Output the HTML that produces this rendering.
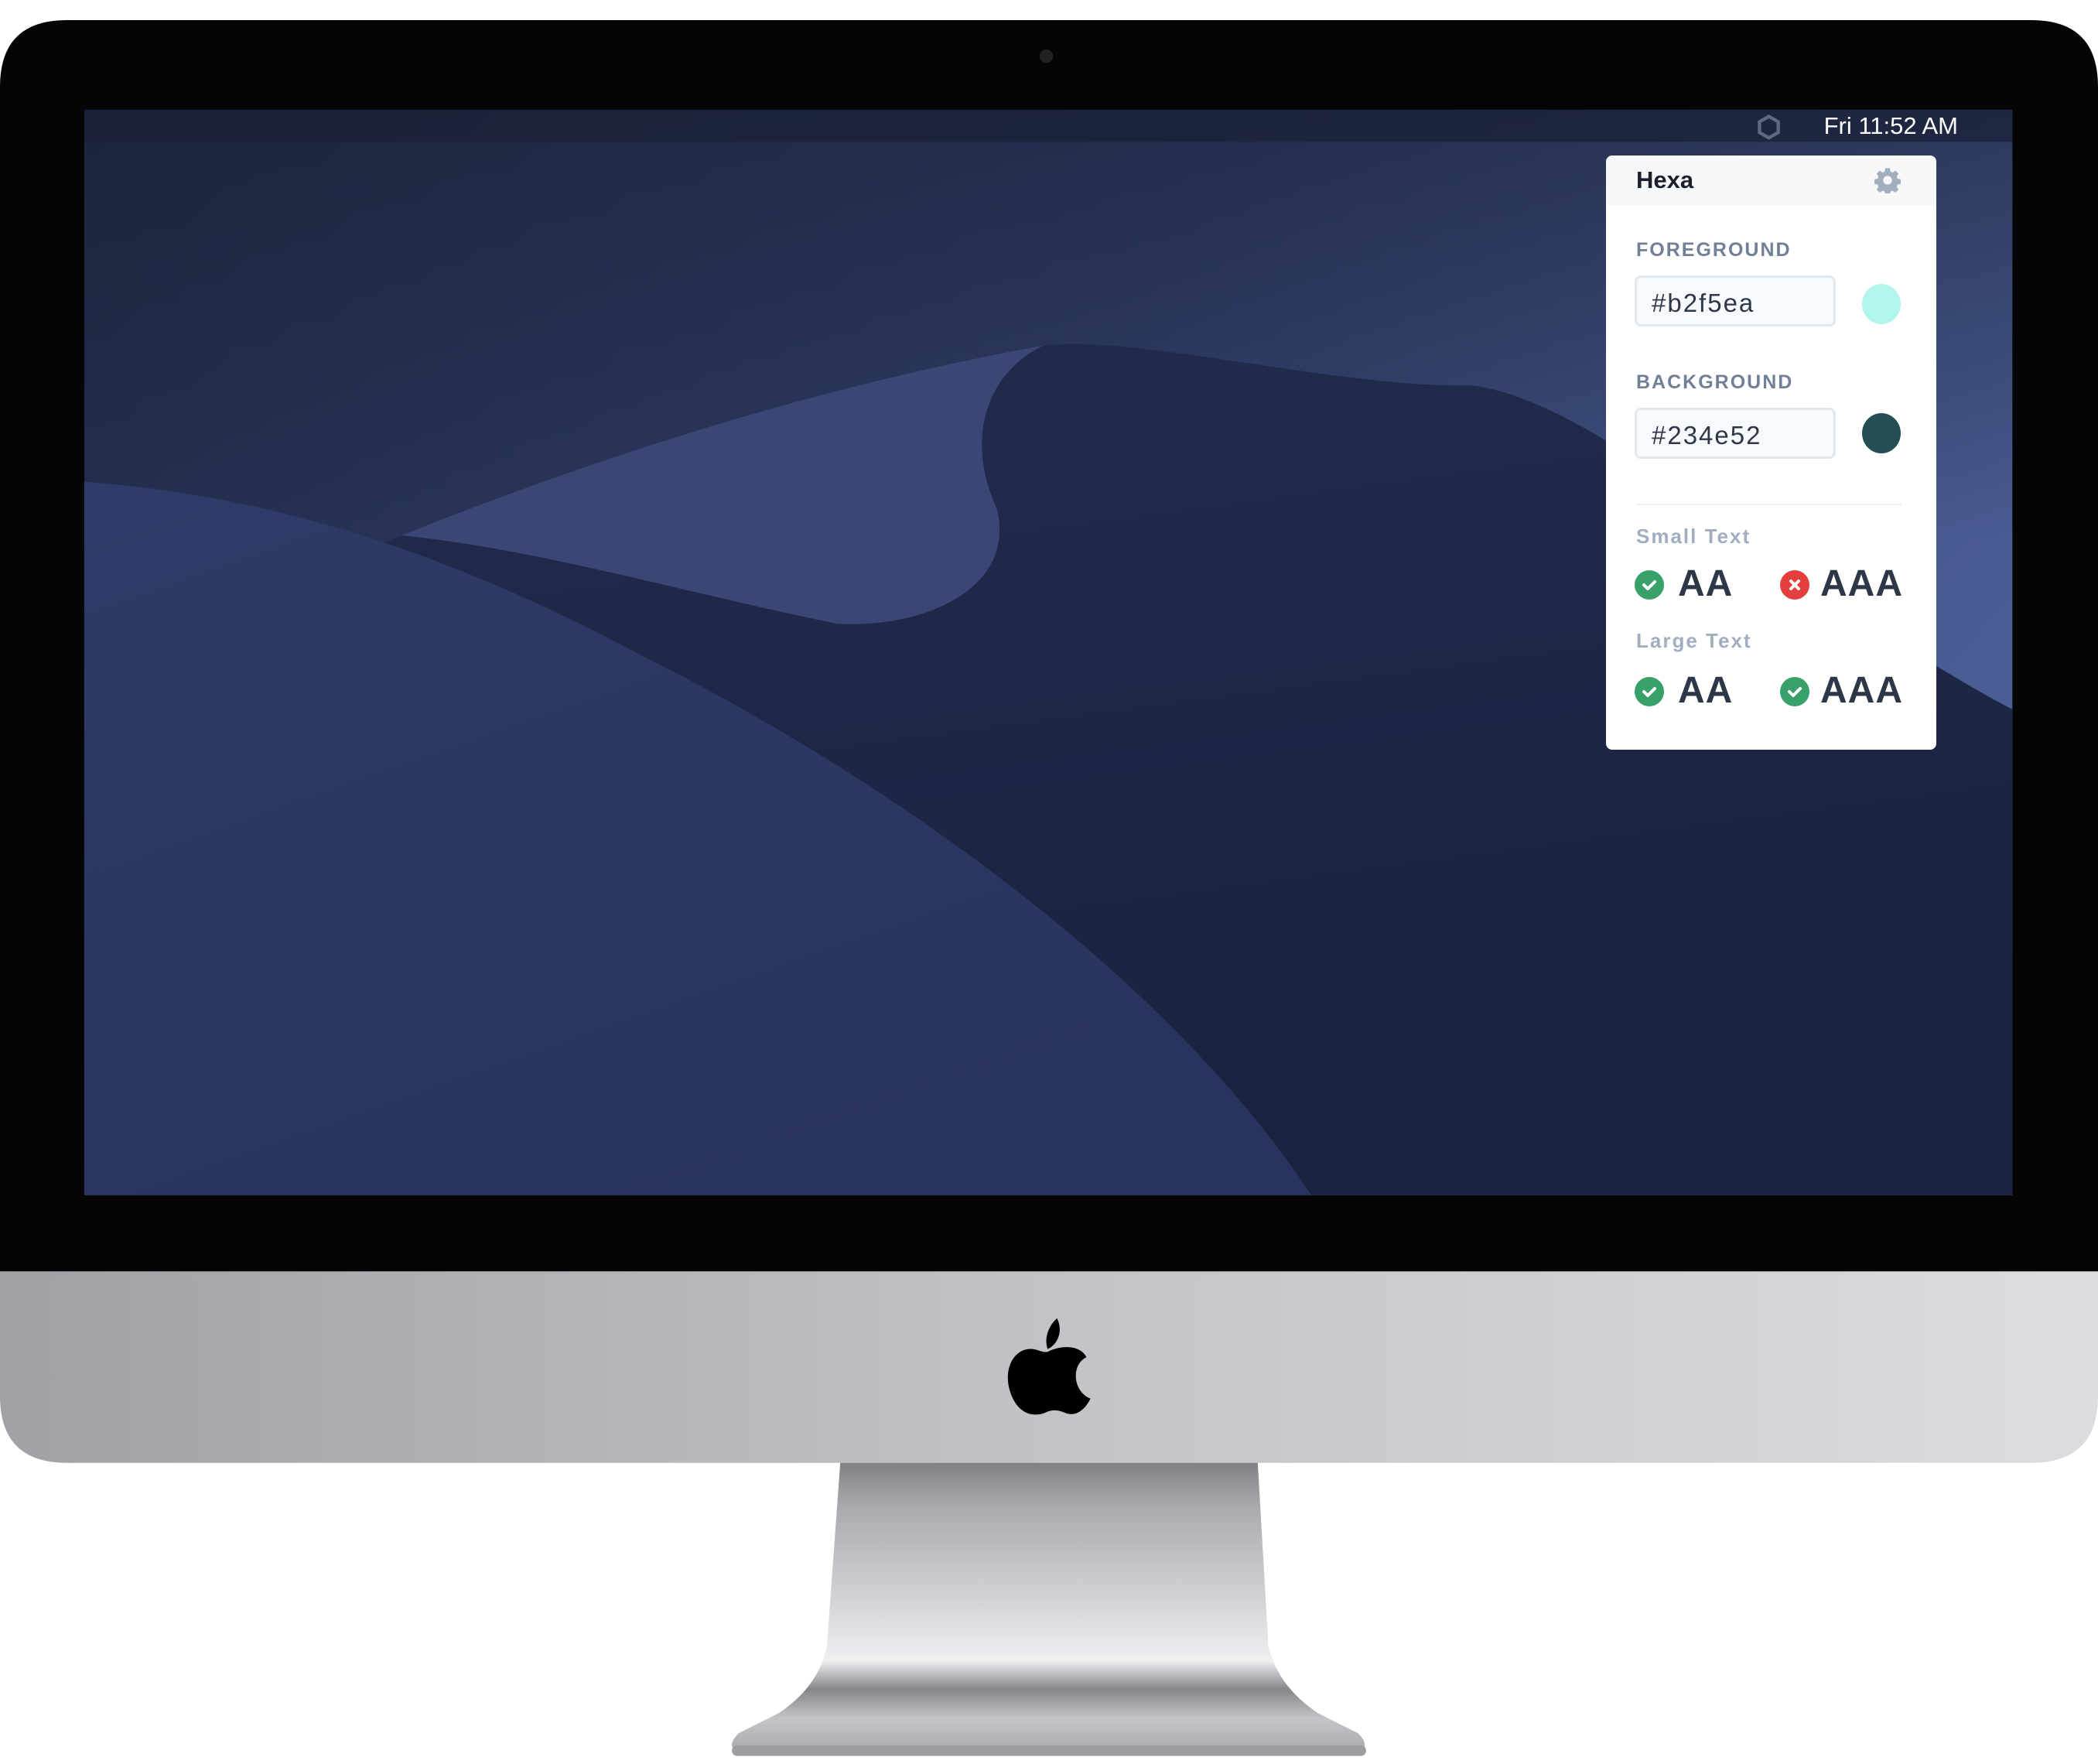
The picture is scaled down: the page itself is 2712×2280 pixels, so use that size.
<!DOCTYPE html>
<html><head><meta charset="utf-8"><style>
html,body{margin:0;padding:0;width:2712px;height:2280px;background:#fff;overflow:hidden;font-family:"Liberation Sans",sans-serif}
svg.bg{position:absolute;left:0;top:0}
.pop{position:absolute;left:2076px;top:201px;width:427px;height:768px;background:#fff;border-radius:8px;overflow:hidden}
.hdr{position:absolute;left:0;top:0;width:427px;height:64px;background:#f7f8fa}
.t{position:absolute;white-space:nowrap}
.lbl{font-size:25px;color:#718096;letter-spacing:2px;font-weight:bold}
.inp{position:absolute;left:37px;width:260px;height:66px;border:3px solid #e2e8f0;border-radius:8px;background:#f7fafc;box-sizing:border-box}
.inp span{position:absolute;left:19px;top:14px;font-size:33px;color:#2d3748;letter-spacing:2px}
.sm{font-size:26px;color:#a0aec0;letter-spacing:2px;font-weight:bold}
.big{font-size:48px;font-weight:bold;color:#2d3748;letter-spacing:1px}
.ic{position:absolute;width:38px;height:38px;border-radius:50%}
</style></head><body>
<svg class="bg" width="2712" height="2280" viewBox="0 0 1568 1318" preserveAspectRatio="none">
<defs>
<linearGradient id="sky" x1="0" y1="0" x2="1" y2="0.5"><stop offset="0" stop-color="#1f2844"/><stop offset="0.5" stop-color="#2e3b64"/><stop offset="1" stop-color="#4b5e96"/></linearGradient>
<linearGradient id="skyv" x1="0" y1="0" x2="0" y2="1"><stop offset="0" stop-color="#1a2036" stop-opacity="0.5"/><stop offset="0.4" stop-color="#1a2036" stop-opacity="0"/></linearGradient>
<linearGradient id="chin" x1="0" y1="0" x2="1" y2="0"><stop offset="0" stop-color="#a0a1a5"/><stop offset="0.5" stop-color="#c2c3c6"/><stop offset="1" stop-color="#dcdde0"/></linearGradient>
<linearGradient id="stand" x1="0" y1="0" x2="0" y2="1"><stop offset="0" stop-color="#808185"/><stop offset="0.15" stop-color="#a9aaae"/><stop offset="0.5" stop-color="#d6d7da"/><stop offset="0.68" stop-color="#eeeff1"/><stop offset="0.78" stop-color="#85868a"/><stop offset="0.88" stop-color="#c4c5c8"/><stop offset="1" stop-color="#a8a9ad"/></linearGradient>
<linearGradient id="fg" x1="0" y1="0" x2="0.6" y2="1"><stop offset="0" stop-color="#2f3b68"/><stop offset="1" stop-color="#29345e"/></linearGradient>
<linearGradient id="gr" x1="0" y1="0" x2="0.3" y2="1"><stop offset="0" stop-color="#222c4e"/><stop offset="1" stop-color="#1a2240"/></linearGradient>
</defs>
<path d="M50,15 H1518 Q1568,15 1568,65 V950 H0 V65 Q0,15 50,15Z" fill="#050505"/>
<circle cx="782" cy="42" r="5" fill="#222"/>
<path d="M0,950 H1568 V1043 Q1568,1093 1518,1093 H50 Q0,1093 0,1043Z" fill="url(#chin)"/>
<path d="M628,1093 H940 L948,1230 Q955,1260 985,1280 L1015,1295 Q1025,1305 1015,1310 H552 Q542,1305 552,1295 L582,1280 Q612,1260 618,1230Z" fill="url(#stand)"/>
<rect x="547" y="1304" width="474" height="8" rx="4" fill="#9c9da1"/>
<path d="M790,985 C795,995 790,1005 783,1008 C780,1000 784,990 790,985Z M783,1010 C795,1004 808,1006 812,1014 C800,1020 802,1040 815,1045 C810,1055 803,1058 797,1056 C790,1053 786,1053 780,1056 C770,1059 760,1055 755,1040 C750,1025 756,1010 768,1008 C775,1007 778,1011 783,1010Z" fill="#000"/>
<rect x="63" y="82" width="1441" height="811" fill="url(#sky)"/>
<rect x="63" y="82" width="1441" height="811" fill="url(#skyv)"/>
<path d="M300,400 Q550,300 780,258 C850,250 1000,290 1100,288 C1200,300 1350,450 1504,530 V893 H63 V500Z" fill="url(#gr)"/>
<path d="M300,400 Q550,300 780,258 C735,280 722,330 745,380 C760,440 690,470 625,466 C500,440 400,410 300,400Z" fill="#3c4674"/>
<path d="M63,360 C200,370 330,410 480,490 C680,590 880,740 980,893 H63Z" fill="url(#fg)"/>
<rect x="63" y="82" width="1441" height="24" fill="#1a2036" opacity="0.7"/>
<path d="M1322,87 L1329,91 V99 L1322,103 L1315,99 V91Z" fill="none" stroke="#5f6a80" stroke-width="2.5"/>
</svg>
<div class="t" style="right:181px;top:145px;font-size:31px;color:#fff">Fri 11:52 AM</div>
<div class="pop">
<div class="hdr"></div>
<div class="t" style="left:39px;top:14px;font-size:31px;font-weight:bold;color:#1a202c">Hexa</div>
<svg class="t" style="left:347px;top:15px" width="34" height="34" viewBox="0 0 24 24"><path fill="#a0aec0" d="M10 1h4l.6 3 2 .9 2.6-1.7 2.8 2.8-1.7 2.6.9 2 3 .6v4l-3 .6-.9 2 1.7 2.6-2.8 2.8-2.6-1.7-2 .9-.6 3h-4l-.6-3-2-.9-2.6 1.7-2.8-2.8 1.7-2.6-.9-2-3-.6v-4l3-.6.9-2-1.7-2.6 2.8-2.8 2.6 1.7 2-.9zM12 8a4 4 0 100 8 4 4 0 000-8z"/></svg>
<div class="t lbl" style="left:39px;top:108px">FOREGROUND</div>
<div class="inp" style="top:155px"><span>#b2f5ea</span></div>
<div class="ic" style="left:331px;top:166px;width:50px;height:52px;background:#b2f5ea"></div>
<div class="t lbl" style="left:39px;top:279px">BACKGROUND</div>
<div class="inp" style="top:326px"><span>#234e52</span></div>
<div class="ic" style="left:331px;top:333px;width:50px;height:52px;background:#234e52"></div>
<div style="position:absolute;left:39px;top:450px;width:343px;height:2px;background:#edf0f4"></div>
<div class="t sm" style="left:39px;top:477px">Small Text</div>
<div class="ic" style="left:37px;top:536px;background:#38a169"><svg width="38" height="38" viewBox="0 0 38 38"><path d="M12 19l5 5 9-9" fill="none" stroke="#fff" stroke-width="4" stroke-linecap="round" stroke-linejoin="round"/></svg></div>
<div class="t big" style="left:93px;top:526px">AA</div>
<div class="ic" style="left:225px;top:536px;background:#e53e3e"><svg width="38" height="38" viewBox="0 0 38 38"><path d="M14 14l10 10M24 14l-10 10" fill="none" stroke="#fff" stroke-width="4" stroke-linecap="round"/></svg></div>
<div class="t big" style="left:277px;top:526px">AAA</div>
<div class="t sm" style="left:39px;top:612px">Large Text</div>
<div class="ic" style="left:37px;top:674px;background:#38a169"><svg width="38" height="38" viewBox="0 0 38 38"><path d="M12 19l5 5 9-9" fill="none" stroke="#fff" stroke-width="4" stroke-linecap="round" stroke-linejoin="round"/></svg></div>
<div class="t big" style="left:93px;top:664px">AA</div>
<div class="ic" style="left:225px;top:674px;background:#38a169"><svg width="38" height="38" viewBox="0 0 38 38"><path d="M12 19l5 5 9-9" fill="none" stroke="#fff" stroke-width="4" stroke-linecap="round" stroke-linejoin="round"/></svg></div>
<div class="t big" style="left:277px;top:664px">AAA</div>
</div>
</body></html>
